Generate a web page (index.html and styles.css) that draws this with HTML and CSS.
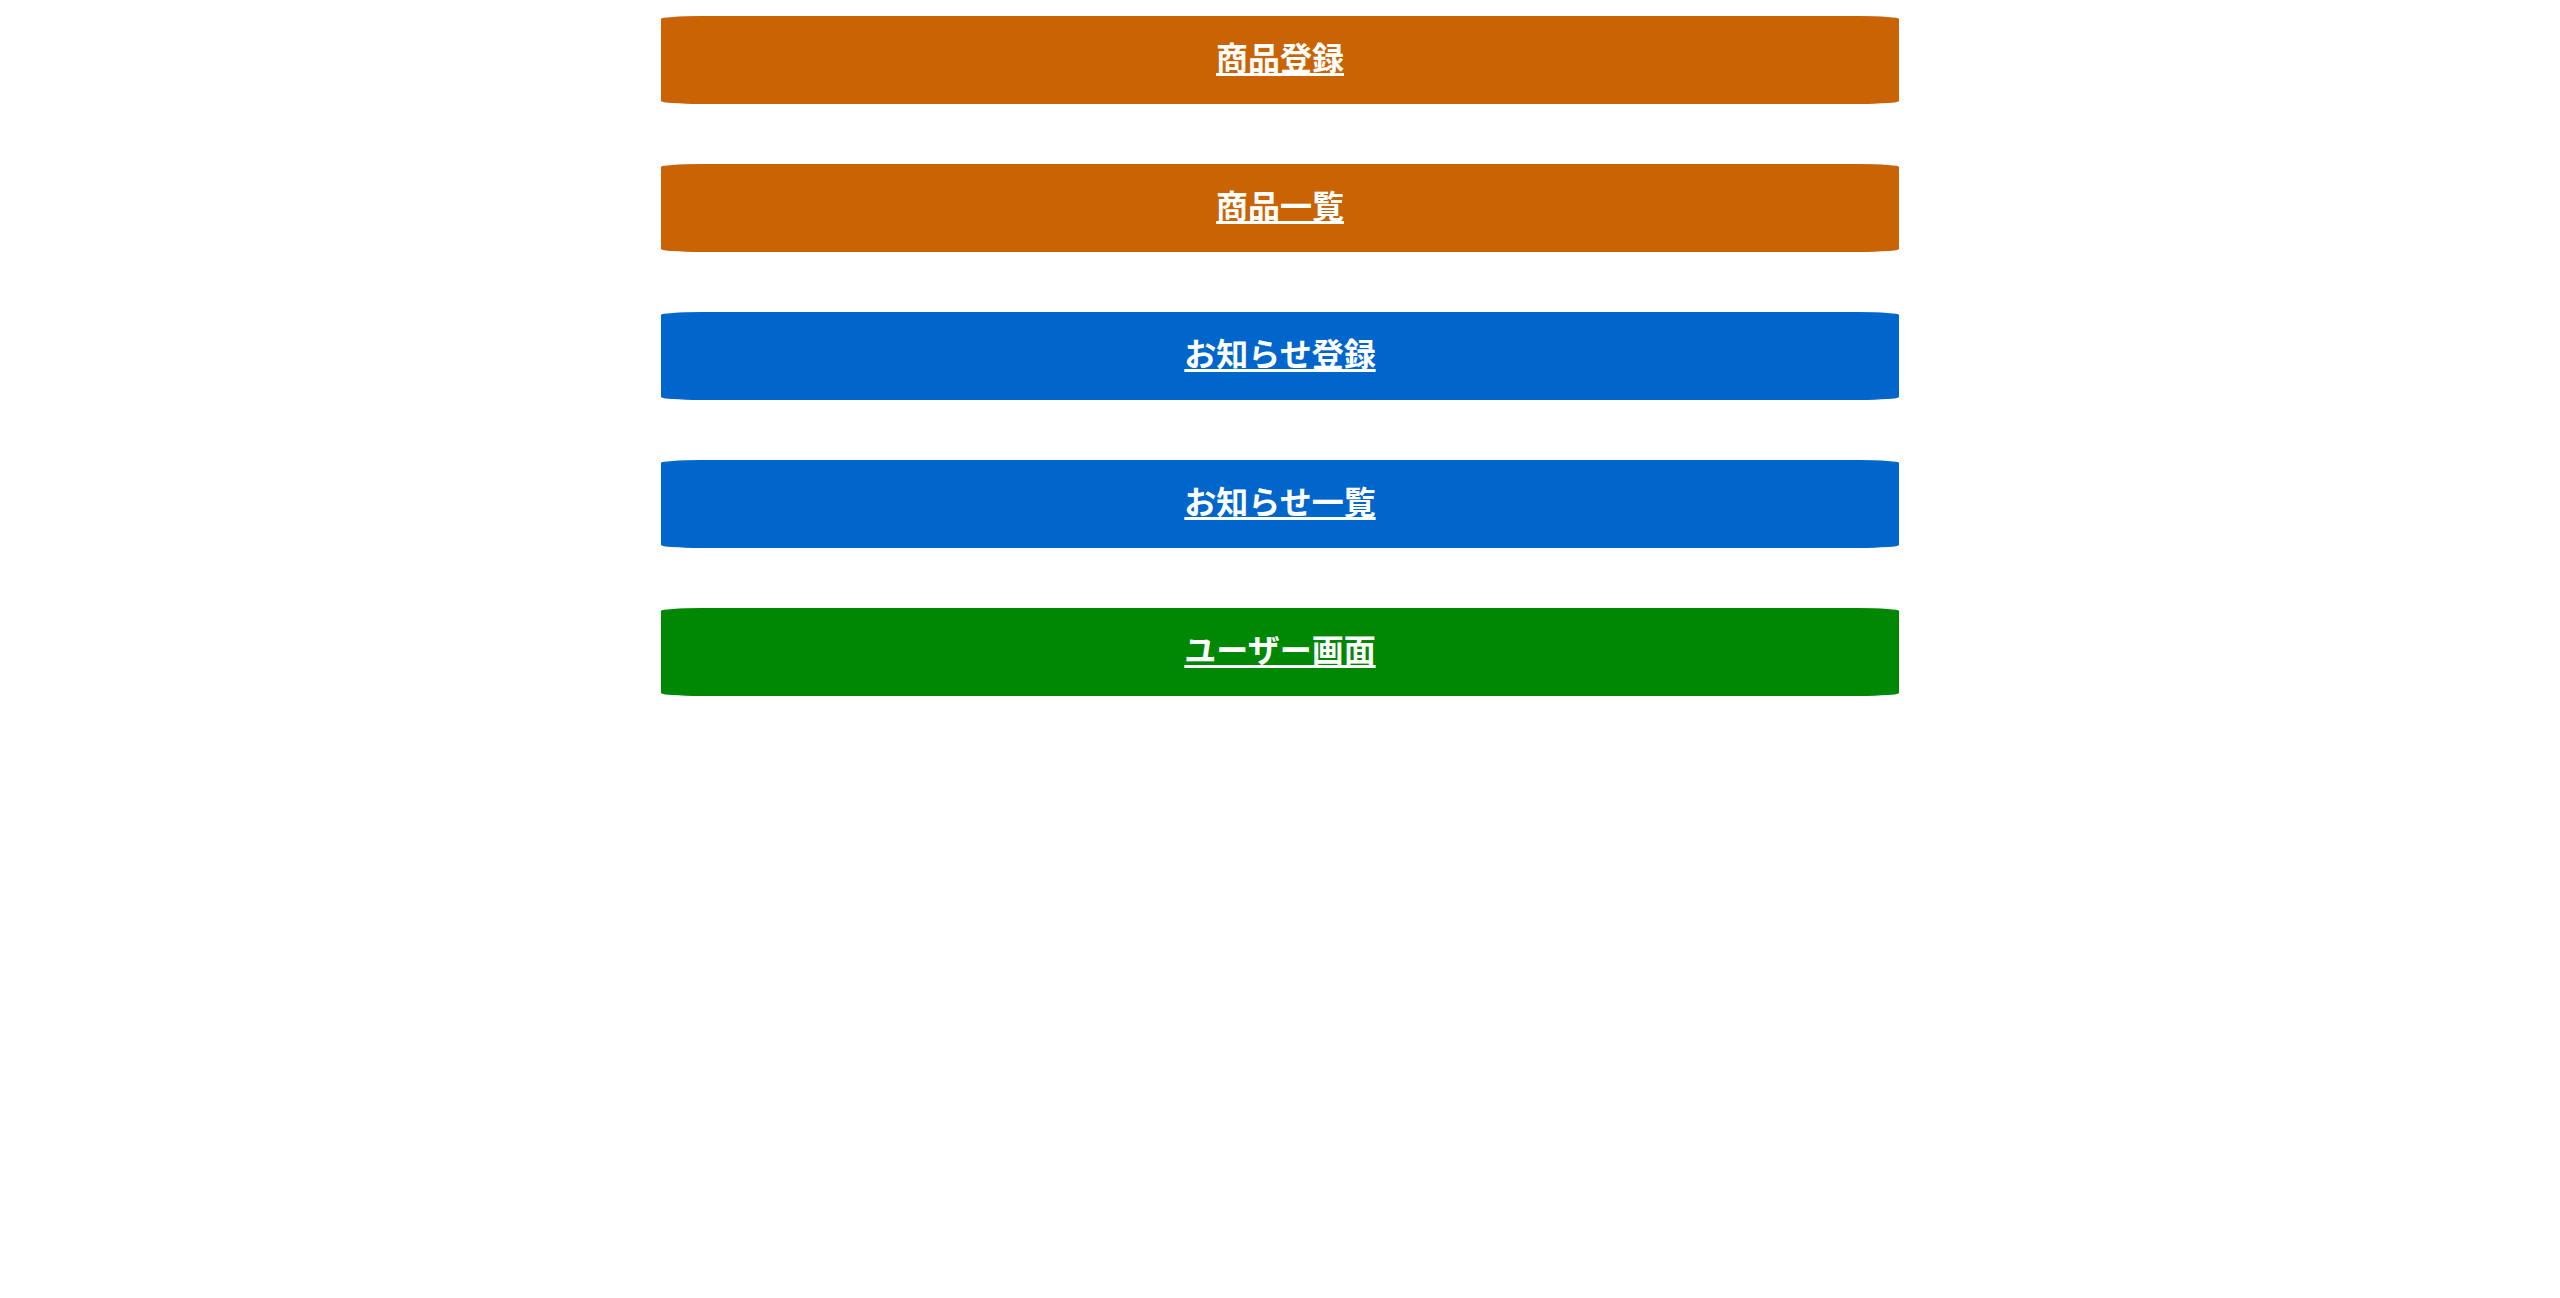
FILE: index.html
```html
<!DOCTYPE html>
<html lang="ja">
<head>
<meta charset="utf-8">
<title>管理メニュー</title>
<link rel="stylesheet" href="styles.css">
</head>
<body>
<nav class="menu">
  <a class="btn btn-orange" href="#">商品登録</a>
  <a class="btn btn-orange" href="#">商品一覧</a>
  <a class="btn btn-blue" href="#">お知らせ登録</a>
  <a class="btn btn-blue" href="#">お知らせ一覧</a>
  <a class="btn btn-green" href="#">ユーザー画面</a>
</nav>
</body>
</html>
```

FILE: styles.css
```css
html, body {
  margin: 0;
  padding: 0;
  background: #ffffff;
}
body {
  font-family: "Noto Sans CJK JP", "Noto Sans", sans-serif;
}
.menu {
  width: 1238px;
  margin: 0 auto;
  padding-top: 16px;
  display: flex;
  flex-direction: column;
  gap: 60px;
}
.btn {
  display: flex;
  align-items: center;
  justify-content: center;
  height: 88px;
  border-radius: 40px / 3px;
  color: #ffffff;
  font-size: 32px;
  font-weight: 700;
  text-decoration: underline;
  text-decoration-thickness: 3px;
  text-underline-offset: 3px;
  line-height: 1;
  padding-bottom: 8px;
  box-sizing: border-box;
}
.btn-orange { background: #c96304; }
.btn-blue { background: #0066cc; }
.btn-green { background: #008805; }
```
